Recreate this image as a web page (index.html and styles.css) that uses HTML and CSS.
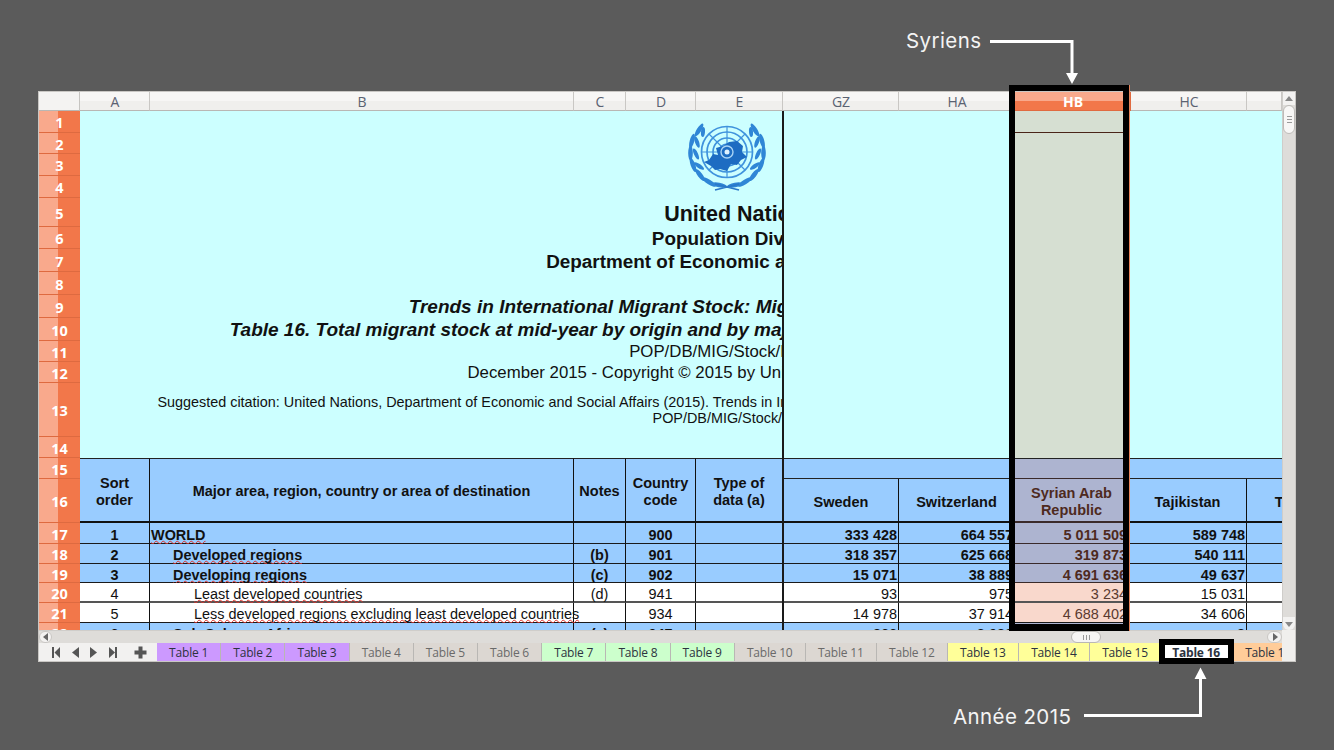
FILE: index.html
```html
<!DOCTYPE html>
<html lang="fr">
<head>
<meta charset="utf-8">
<title>Table 16</title>
<link rel="stylesheet" href="styles.css">
</head>
<body>
<main class="window">
  <div class="main">
    <section class="sheet">
      <div class="col-heads">
        <div class="corner"></div>
        <div class="ch w70">A</div><div class="ch w424">B</div><div class="ch w52">C</div><div class="ch w70">D</div><div class="ch w87">E</div>
        <div class="ch w116">GZ</div><div class="ch w116">HA</div><div class="ch w116 ch-sel">HB</div><div class="ch w116">HC</div><div class="ch w35"></div>
      </div>
      <div class="body">
        <div class="rowheads rows">
          <div>1</div><div>2</div><div>3</div><div>4</div><div>5</div><div>6</div><div>7</div><div>8</div><div>9</div><div>10</div><div>11</div>
          <div>12</div><div>13</div><div>14</div><div>15</div><div>16</div><div>17</div><div>18</div><div>19</div><div>20</div><div>21</div><div>22</div>
        </div>
        <div class="frozen rows">
          <div class="title">
            <svg class="logo" viewBox="0 0 80 70" width="80" height="70" aria-label="UN">
              <g fill="none" stroke="#3f93dd" stroke-width="1.7">
                <circle cx="40" cy="30" r="25.500"/><circle cx="40" cy="30" r="20"/><circle cx="40" cy="30" r="14"/><circle cx="40" cy="30" r="8"/>
                <path d="M40 4V56M14 30H66M22 12L58 48M58 12L22 48" stroke-width="1.200"/>
              </g>
              <path d="M17 40L22 38 26 32 31 33 29 26 36 24 42 20 50 19 56 24 55 30 60 35 54 38 50 43 44 42 40 49 33 47 28 48 24 44Z" fill="#1d6cc2"/>
              <path d="M40 24A6 6 0 0 1 46 30 6 6 0 0 1 40 36 6 6 0 0 1 34 30 6 6 0 0 1 40 24Z" fill="none" stroke="#a9d4f5" stroke-width="1.400"/>
              <circle cx="40" cy="30" r="2.500" fill="#dff2ff"/>
              <g fill="#2f86d6">
                <ellipse cx="32" cy="63" rx="8" ry="2.300" transform="rotate(10 32 63)"/><ellipse cx="22" cy="60" rx="8" ry="2.300" transform="rotate(32 22 60)"/>
                <ellipse cx="13" cy="53" rx="7.500" ry="2.300" transform="rotate(52 13 53)"/><ellipse cx="6" cy="43" rx="7.500" ry="2.300" transform="rotate(70 6 43)"/>
                <ellipse cx="3.500" cy="31" rx="7.500" ry="2.300" transform="rotate(90 3.500 31)"/><ellipse cx="5" cy="19" rx="7.500" ry="2.300" transform="rotate(105 5 19)"/>
                <ellipse cx="12" cy="8" rx="7.500" ry="2.300" transform="rotate(122 12 8)"/>
                <ellipse cx="12" cy="44" rx="6" ry="2" transform="rotate(35 12 44)"/><ellipse cx="9" cy="32" rx="6" ry="2" transform="rotate(65 9 32)"/>
                <ellipse cx="10" cy="20" rx="6" ry="2" transform="rotate(70 10 20)"/><ellipse cx="16" cy="10" rx="5" ry="2" transform="rotate(95 16 10)"/>
                <ellipse cx="48" cy="63" rx="8" ry="2.300" transform="rotate(-10 48 63)"/><ellipse cx="58" cy="60" rx="8" ry="2.300" transform="rotate(-32 58 60)"/>
                <ellipse cx="67" cy="53" rx="7.500" ry="2.300" transform="rotate(-52 67 53)"/><ellipse cx="74" cy="43" rx="7.500" ry="2.300" transform="rotate(-70 74 43)"/>
                <ellipse cx="76.500" cy="31" rx="7.500" ry="2.300" transform="rotate(-90 76.500 31)"/><ellipse cx="75" cy="19" rx="7.500" ry="2.300" transform="rotate(-105 75 19)"/>
                <ellipse cx="68" cy="8" rx="7.500" ry="2.300" transform="rotate(-122 68 8)"/>
                <ellipse cx="68" cy="44" rx="6" ry="2" transform="rotate(-35 68 44)"/><ellipse cx="71" cy="32" rx="6" ry="2" transform="rotate(-65 71 32)"/>
                <ellipse cx="70" cy="20" rx="6" ry="2" transform="rotate(-70 70 20)"/><ellipse cx="64" cy="10" rx="5" ry="2" transform="rotate(-95 64 10)"/>
              </g>
              <path d="M28 68L52 62M52 68L28 62" stroke="#2a78c8" stroke-width="1.600"/>
            </svg>
            <div class="t t5">United Nations</div>
            <div class="t t6">Population Division</div>
            <div class="t t7">Department of Economic and Social Affairs</div>
            <div class="t t9">Trends in International Migrant Stock: Migrants by Destination and Origin</div>
            <div class="t t10">Table 16. Total migrant stock at mid-year by origin and by major area, region, country or area of destination, 2015</div>
            <div class="t t11">POP/DB/MIG/Stock/Rev.2015</div>
            <div class="t t12">December 2015 - Copyright © 2015 by United Nations. All rights reserved</div>
            <div class="t t13">Suggested citation: United Nations, Department of Economic and Social Affairs (2015). Trends in International Migrant Stock: Migrants by Destination and Origin (United Nations database,<br>POP/DB/MIG/Stock/Rev.2015).</div>
          </div>
          <div class="hd cA"><span>Sort<br>order</span></div>
          <div class="hd cB"><span>Major area, region, country or area of destination</span></div>
          <div class="hd cC"><span>Notes</span></div>
          <div class="hd cD"><span>Country<br>code</span></div>
          <div class="hd cE"><span>Type of<br>data (a)</span></div>

          <div class="c blue b mid">1</div><div class="c blue b lt ind0 sp"><u>WORLD</u></div><div class="c blue b mid"></div><div class="c blue b mid">900</div><div class="c blue last"></div>
          <div class="c blue b mid">2</div><div class="c blue b lt ind1 sp"><u>Developed regions</u></div><div class="c blue b mid">(b)</div><div class="c blue b mid">901</div><div class="c blue last"></div>
          <div class="c blue b mid">3</div><div class="c blue b lt ind1 sp"><u>Developing regions</u></div><div class="c blue b mid">(c)</div><div class="c blue b mid">902</div><div class="c blue last"></div>
          <div class="c mid heavy">4</div><div class="c lt ind2 sp heavy"><u>Least developed countries</u></div><div class="c mid heavy">(d)</div><div class="c mid heavy">941</div><div class="c last heavy"></div>
          <div class="c mid">5</div><div class="c lt ind2 sp"><u>Less developed regions excluding least developed countries</u></div><div class="c mid"></div><div class="c mid">934</div><div class="c last"></div>
          <div class="c blue b mid">6</div><div class="c blue b lt ind1 sp"><u>Sub-Saharan Africa</u></div><div class="c blue b mid">(e)</div><div class="c blue b mid">947</div><div class="c blue last"></div>
        </div>
        <div class="pane rows">
          <div class="top-span"></div>
          <div class="sel-top"></div>
          <div class="band"></div>
          <div class="band-sel"></div>
          <div class="hd2">Sweden</div><div class="hd2">Switzerland</div><div class="hd2 sel-b">Syrian Arab<br>Republic</div><div class="hd2">Tajikistan</div><div class="hd2">Thailand</div>

          <div class="c blue b rt">333 428</div><div class="c blue b rt">664 557</div><div class="c sel-b b rt">5 011 509</div><div class="c blue b rt">589 748</div><div class="c blue b rt"></div>
          <div class="c blue b rt">318 357</div><div class="c blue b rt">625 668</div><div class="c sel-b b rt">319 873</div><div class="c blue b rt">540 111</div><div class="c blue b rt"></div>
          <div class="c blue b rt">15 071</div><div class="c blue b rt">38 889</div><div class="c sel-b b rt">4 691 636</div><div class="c blue b rt">49 637</div><div class="c blue b rt"></div>
          <div class="c rt heavy">93</div><div class="c rt heavy">975</div><div class="c sel-w rt heavy">3 234</div><div class="c rt heavy">15 031</div><div class="c rt heavy"></div>
          <div class="c rt">14 978</div><div class="c rt">37 914</div><div class="c sel-w rt">4 688 402</div><div class="c rt">34 606</div><div class="c rt"></div>
          <div class="c blue b rt">866</div><div class="c blue b rt">2 030</div><div class="c sel-b b rt">50 214</div><div class="c blue b rt">2</div><div class="c blue b rt"></div>
        </div>
      </div>
    </section>
    <div class="hscroll">
      <span class="sbtn sbtn-l"><svg width="6" height="8" viewBox="0 0 6 8"><path d="M5 0V8L0 4Z" fill="#666"/></svg></span>
      <span class="htrack"><span class="hthumb"><svg width="7" height="5" viewBox="0 0 7 5"><path d="M.5 0V5M3.500 0V5M6.500 0V5" stroke="#999"/></svg></span></span>
      <span class="sbtn sbtn-r"><svg width="6" height="8" viewBox="0 0 6 8"><path d="M1 0V8L6 4Z" fill="#666"/></svg></span>
    </div>
    <nav class="tabs">
      <div class="tabnav">
        <svg class="navicons" width="118" height="18" viewBox="0 0 118 18" aria-hidden="true">
          <g fill="#555">
            <path d="M13 4H15V15H13ZM21 4V15L15.500 9.500Z"/>
            <path d="M40 4V15L33 9.500Z"/>
            <path d="M51 4V15L58 9.500Z"/>
            <path d="M70 4L76 9.500 70 15ZM76 4H78V15H76Z"/>
            <path d="M99.500 3.500H103.500V7.500H107.500V11.500H103.500V15.500H99.500V11.500H95.500V7.500H99.500Z"/>
          </g>
        </svg>
      </div>
      <div class="tab s purple">Table 1</div><div class="tab s purple">Table 2</div><div class="tab s purple">Table 3</div>
      <div class="tab s grey">Table 4</div><div class="tab s grey">Table 5</div><div class="tab s grey">Table 6</div>
      <div class="tab s green">Table 7</div><div class="tab s green">Table 8</div><div class="tab s green">Table 9</div>
      <div class="tab l grey">Table 10</div><div class="tab l grey">Table 11</div><div class="tab l grey">Table 12</div>
      <div class="tab l yellow">Table 13</div><div class="tab l yellow">Table 14</div><div class="tab l yellow">Table 15</div>
      <div class="tab l active">Table 16</div><div class="tab l orange">Table 17</div>
    </nav>
  </div>
  <aside class="vscroll">
    <div class="vtrack">
      <span class="vbtn-up"><svg width="8" height="6" viewBox="0 0 8 6"><path d="M0 5H8L4 0Z" fill="#888"/></svg></span>
      <span class="vthumb"><svg width="5" height="7" viewBox="0 0 5 7"><path d="M0 .5H5M0 3.500H5M0 6.500H5" stroke="#999"/></svg></span>
      <span class="vbtn-down"><svg width="8" height="6" viewBox="0 0 8 6"><path d="M0 1H8L4 6Z" fill="#888"/></svg></span>
    </div>
  </aside>
</main>

<div class="frame frame-col"></div>
<div class="frame frame-tab"></div>
<div class="label label-syr">Syriens</div>
<div class="label label-year">Année 2015</div>
<svg class="arrows" width="1334" height="750" viewBox="0 0 1334 750" aria-hidden="true">
  <path d="M990 41.500H1072V76M1084 715.500H1200.500V678" fill="none" stroke="#fff" stroke-width="3"/>
  <path d="M1066 73H1078L1072 84ZM1194.500 679H1206.500L1200.500 667.500Z" fill="#fff"/>
</svg>
</body>
</html>
```
FILE: styles.css
```css
* { box-sizing: border-box; }
html, body { margin: 0; height: 100%; }
body {
  width: 1334px; height: 750px; overflow: hidden; position: relative;
  background: #5b5b5b; padding: 92px 39px 0;
  font-family: "Liberation Sans", Arial, sans-serif; font-size: 14px; color: #111;
}
.window { display: flex; width: 1256px; height: 569px; box-shadow: 0 0 0 1px #c9c7c4; background: #f0efed; }
.main { width: 1243px; display: flex; flex-direction: column; }
.sheet { height: 538px; display: flex; flex-direction: column; overflow: hidden; }

/* Column headers */
.col-heads { display: flex; height: 19px; flex: none; overflow: hidden; font-family: "Open Sans", sans-serif; font-size: 14px; color: #5a6272; }
.corner { width: 41px; flex: none; background: #f4f3f2; border-right: 1px solid #c6c4c1; border-bottom: 1px solid #b9b7b4; }
.ch { flex: none; display: flex; align-items: center; justify-content: center; padding-left: 1px; background: linear-gradient(#f7f6f5 50%, #f0efed 50%); border-right: 1px solid #c9c7c4; border-bottom: 1px solid #b9b7b4; }
.w70 { width: 70px; } .w424 { width: 424px; } .w52 { width: 52px; } .w87 { width: 87px; } .w116 { width: 116px; } .w35 { width: 35px; }
.ch-sel { background: linear-gradient(#f9a98c 50%, #f2774a 50%); color: #fff; font-weight: 700; border-color: #e06a40; }

/* Body */
.body { display: flex; flex: 1; min-height: 0; overflow: hidden; }
.rows { display: grid; grid-template-rows: 22px 21px 22px 22px 29px 22px 23px 23px 23px 23px 21px 21px 54px 21px 21px 44px 21px 20px 19px 20px 20px 20px; }
.rowheads { width: 41px; flex: none; font-family: "Open Sans", sans-serif; font-weight: 700; font-size: 14.5px; color: #fff; }
.rowheads div { display: flex; align-items: center; justify-content: center; padding-top: 2px; background: linear-gradient(90deg, #f9a98c 19px, #f2774a 19px); border-bottom: 1px solid #de6a40; }
.frozen { width: 704px; flex: none; grid-template-columns: 70px 424px 52px 70px 86px; border-right: 2px solid #1a1a1a; overflow: hidden; background: #fff; }
.pane { flex: 1; min-width: 0; grid-template-columns: 115px 116px 114px 118px 116px; overflow: hidden; background: #fff; }

/* Title block */
.title { grid-row: 1 / 15; grid-column: 1 / -1; width: 1320px; background: #ccffff; display: grid; text-align: center; white-space: nowrap;
  grid-template-rows: 22px 21px 22px 22px 29px 22px 23px 23px 23px 23px 21px 21px 54px 21px; }
.logo { grid-row: 1 / 5; grid-column: 1; justify-self: center; margin: 11px 26px 0 0; }
.t { grid-column: 1; align-self: center; font-size: 16.8px; line-height: 16px; }
.t5 { grid-row: 5; font-size: 21.5px; font-weight: 700; line-height: 24px; padding-top: 2px; }
.t6 { grid-row: 6; font-size: 18.9px; font-weight: 700; line-height: 22px; padding-top: 2px; }
.t7 { grid-row: 7; font-size: 18.9px; font-weight: 700; line-height: 22px; padding-top: 2px; }
.t9 { grid-row: 9; font-size: 19px; font-weight: 700; font-style: italic; line-height: 22px; }
.t10 { grid-row: 10; font-size: 19px; font-weight: 700; font-style: italic; line-height: 22px; }
.t11 { grid-row: 11; }
.t12 { grid-row: 12; padding-top: 1px; }
.t13 { grid-row: 13; font-size: 14.4px; padding-left: 24px; }

/* Headers */
.hd { grid-row: 15 / 17; display: flex; align-items: center; justify-content: center; text-align: center; background: #99ccff; font-weight: 700; font-size: 14.5px; padding-top: 3px; border-top: 1px solid #222; border-bottom: 2px solid #111; border-right: 1px solid #111; line-height: 17px; }
.hd.cE { border-right: 0; }
.band { grid-row: 15; grid-column: 1 / -1; background: #99ccff; border-top: 1px solid #222; border-bottom: 1px solid #222; }
.band-sel { grid-row: 15; grid-column: 3; background: #adb4d0; border-top: 1px solid #222; border-bottom: 1px solid #3a2a2a; }
.top-span { grid-row: 1 / 15; grid-column: 1 / -1; background: #ccffff; }
.sel-top { grid-row: 1 / 15; grid-column: 3; background: linear-gradient(#d6dfd2 21px, #4a2418 21px, #4a2418 22px, #d6dfd2 22px); }
.hd2 { grid-row: 16; display: flex; align-items: center; justify-content: center; text-align: center; background: #99ccff; font-weight: 700; font-size: 14.5px; border-bottom: 2px solid #111; border-right: 1px solid #111; line-height: 17px; padding-top: 4px; }

/* Cells */
.c { display: flex; align-items: center; white-space: nowrap; background: #fff; border-right: 1px solid #111; border-bottom: 1px solid #1a1a1a; font-size: 14.45px; padding-top: 3px; }
.c.last { border-right: 0; }
.blue { background: #99ccff; }
.b { font-weight: 700; }
.mid { justify-content: center; }
.rt { justify-content: flex-end; padding-right: 1px; }
.lt { justify-content: flex-start; }
.ind0 { padding-left: 1px; } .ind1 { padding-left: 23px; } .ind2 { padding-left: 44px; }
.sp { z-index: 1; }
.sp u { text-decoration: underline wavy #e0302a 1px; text-underline-offset: 0; text-decoration-skip-ink: none; }
.heavy { border-bottom: 2px solid #555; }
.sel-b { background: #adb4d0; color: #4e2a1e; border-color: #3a2a2a; }
.sel-w { background: #f9d8cc; color: #5a3a30; }

/* Scrollbars */
.hscroll { height: 13px; flex: none; display: flex; background: #dedcd9; border-top: 1px solid #cfcdca; }
.sbtn { width: 13px; flex: none; display: flex; align-items: center; justify-content: center; background: #f3f2f1; border-radius: 6px; border: 1px solid #c9c7c4; }
.sbtn-r { width: 15px; }
.htrack { flex: 1; display: flex; padding-left: 1019px; }
.hthumb { width: 30px; height: 12px; display: flex; align-items: center; justify-content: center; background: #f6f5f4; border: 1px solid #b9b7b4; border-radius: 6px; }
.vscroll { width: 13px; flex: none; background: #f0efed; }
.vtrack { height: 538px; background: #dedcd9; display: flex; flex-direction: column; align-items: center; border-left: 1px solid #cfcdca; }
.vbtn-up { height: 13px; display: flex; align-items: center; justify-content: center; width: 100%; background: #f3f2f1; }
.vthumb { width: 12px; height: 29px; display: flex; align-items: center; justify-content: center; background: #f8f7f6; border: 1px solid #bdbbb8; border-radius: 6px; }
.vbtn-down { margin-top: auto; height: 13px; width: 100%; display: flex; align-items: center; justify-content: center; background: #f3f2f1; border-radius: 0 0 6px 6px; }

/* Tabs */
.tabs { height: 18px; flex: none; display: flex; overflow: hidden; background: #f2f1f0; font-family: "Open Sans", sans-serif; font-size: 12px; letter-spacing: -0.2px; }
.tabnav { width: 118px; flex: none; }
.navicons { display: block; }
.tab { flex: none; display: flex; align-items: center; justify-content: center; white-space: nowrap; border-right: 1px solid #b9b7b4; color: #2c3340; }
.tab.s { width: 64.2px; } .tab.l { width: 71.07px; }
.purple { background: #cc99ff; } .grey { background: #dcd7d2; color: #6a6a6a; } .green { background: #ccffcc; }
.yellow { background: #ffff99; } .orange { background: #ffcc99; justify-content: flex-start; padding-left: 13px; }
.active { background: #fff; font-weight: 700; color: #2c3340; }

/* Annotations over the screenshot */
.frame { position: absolute; border: 6px solid #000; z-index: 5; }
.frame-col { left: 1009px; top: 85px; width: 120px; height: 546px; border-bottom-width: 7px; box-shadow: 1px 0 0 #e8855c; }
.frame-tab { left: 1159px; top: 639px; width: 75px; height: 25px; }
.label { position: absolute; z-index: 6; color: #f4f4f4; font-family: Inter, "Open Sans", sans-serif; font-size: 20.5px; letter-spacing: 0.4px; line-height: 24px; white-space: nowrap; }
.label-syr { left: 906px; top: 29px; }
.label-year { left: 953px; top: 705px; }
.arrows { position: absolute; left: 0; top: 0; z-index: 6; pointer-events: none; }
```
